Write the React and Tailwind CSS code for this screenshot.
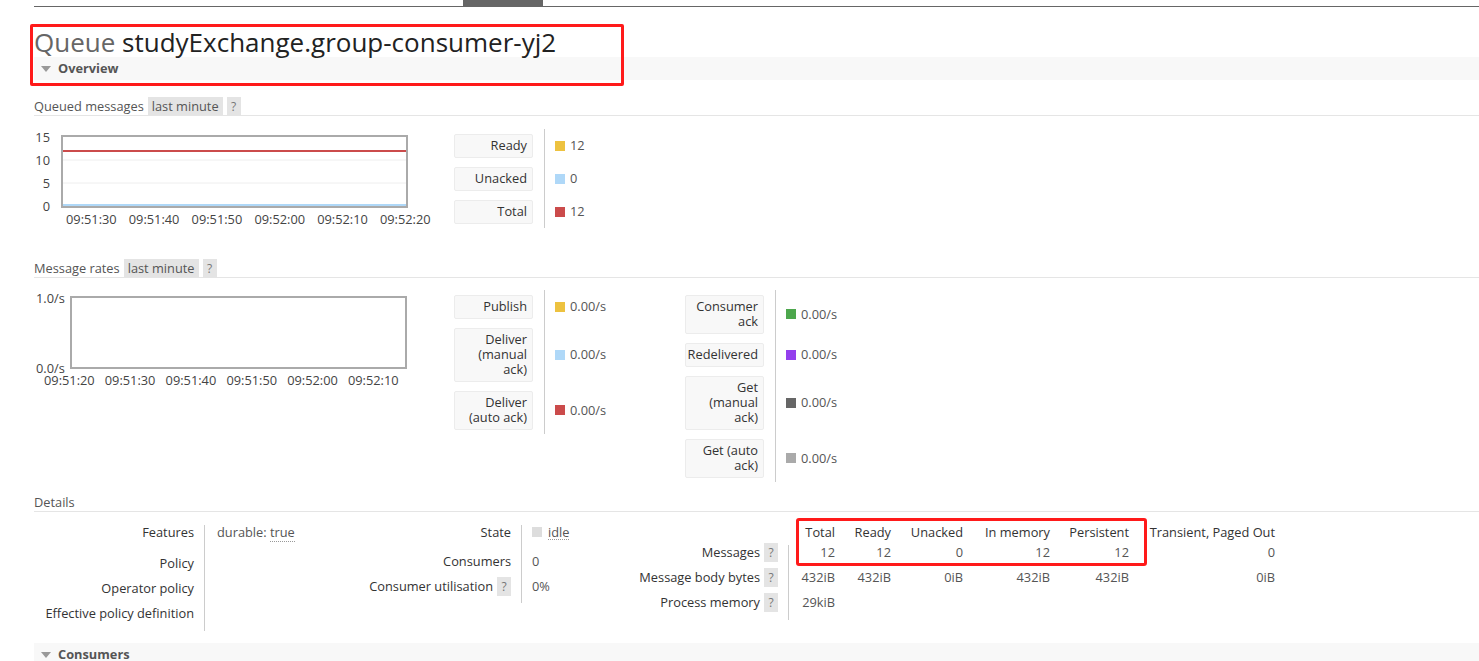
import React from 'react';

const font = { fontFamily: '"Open Sans", "Noto Sans", sans-serif' };

const Badge = ({ children }) => (
  <span className="inline-flex items-center h-[18px] px-[4px] bg-[#e4e4e4] text-[#555]">{children}</span>
);

const Help = () => (
  <span className="inline-flex items-center justify-center w-[14px] h-[19px] bg-[#e4e4e4] text-[#777] text-[12px]">?</span>
);

const SectionTitle = ({ label }) => (
  <div className="flex items-center gap-[4px] h-[19px] border-b border-[#e5e5e5] text-[#555]">
    <span>{label}</span>
    <Badge>last minute</Badge>
    <Help />
  </div>
);

const Bar = ({ label }) => (
  <div className="flex items-center h-[23px] bg-[#f8f8f8] pl-[6px] gap-[6px]">
    <svg width="12" height="8" viewBox="0 0 12 8"><path d="M1 1h10L6 7z" fill="#999" /></svg>
    <span className="font-bold text-[#555]">{label}</span>
  </div>
);

const LegendCol = ({ rows }) => (
  <div className="flex flex-col w-[231px]">
    {rows.map((r) => (
      <div key={r.label} className="flex items-stretch">
        <div className="py-[4.5px] pr-[11px]">
          <div className="w-[79px] bg-[#f8f8f8] border border-[#ececec] rounded-[2px] text-right pr-[5px] py-[3.5px] leading-[15px] text-[#333]">
            {r.label.map((l, i) => (
              <div key={i} className="h-[15px]">{l}</div>
            ))}
          </div>
        </div>
        <div className="flex items-center gap-[5px] border-l border-[#ccc] pl-[10px] text-[#555]">
          <span className="w-[10px] h-[10px]" style={{ background: r.color }} />
          <span>{r.value}</span>
        </div>
      </div>
    ))}
  </div>
);

const QueuedChart = () => (
  <div className="w-[420px] pt-[13.5px]">
    <div className="flex items-start">
      <div className="flex flex-col justify-between w-[16px] h-[85px] text-right text-[#444] leading-[15px]">
        <span>15</span>
        <span>10</span>
        <span>5</span>
        <span>0</span>
      </div>
      <svg width="347" height="73" className="ml-[11px] mt-[5.5px]">
        <rect x="1" y="1" width="345" height="71" fill="#fff" stroke="#aaa" strokeWidth="2" />
        <line x1="2" x2="345" y1="25" y2="25" stroke="#eee" />
        <line x1="2" x2="345" y1="48" y2="48" stroke="#eee" />
        <line x1="2" x2="345" y1="16" y2="16" stroke="#cb4b4b" strokeWidth="2" />
        <line x1="2" x2="345" y1="70" y2="70" stroke="#afd8f8" strokeWidth="2" />
      </svg>
    </div>
    <div className="flex pl-[32px] -mt-[3px] text-[#444]">
      {['09:51:30', '09:51:40', '09:51:50', '09:52:00', '09:52:10', '09:52:20'].map((t) => (
        <span key={t} className="w-[62.8px] shrink-0">{t}</span>
      ))}
    </div>
  </div>
);

const RatesChart = () => (
  <div className="w-[420px] pt-[13px]">
    <div className="flex items-start">
      <div className="flex flex-col justify-between w-[36px] h-[85px] text-[#444] leading-[15px] pl-[2px]">
        <span>1.0/s</span>
        <span>0.0/s</span>
      </div>
      <svg width="337" height="73" className="mt-[5px]">
        <rect x="1" y="1" width="335" height="71" fill="#fff" stroke="#aaa" strokeWidth="2" />
      </svg>
    </div>
    <div className="flex pl-[10px] -mt-[3px] text-[#444]">
      {['09:51:20', '09:51:30', '09:51:40', '09:51:50', '09:52:00', '09:52:10'].map((t) => (
        <span key={t} className="w-[60.8px] shrink-0">{t}</span>
      ))}
    </div>
  </div>
);

export default function App() {
  const counts = [
    ['Total', '12', '432iB', '29kiB', 'w-[46px]'],
    ['Ready', '12', '432iB', '', 'w-[56px]'],
    ['Unacked', '0', '0iB', '', 'w-[72px]'],
    ['In memory', '12', '432iB', '', 'w-[87px]'],
    ['Persistent', '12', '432iB', '', 'w-[79px]'],
    ['Transient, Paged Out', '0', '0iB', '', 'w-[146px]'],
  ];

  return (
    <div className="relative min-h-[661px] bg-white text-[12.8px] leading-[15px] overflow-hidden" style={font}>
      <div className="ml-[34px] flex h-[7px] border-b border-[#666]">
        <div className="ml-[429px] w-[80px] bg-[#666]" />
      </div>

      <div className="pl-[34px]">
        <h1 className="pt-[20px] text-[26px] leading-[30px] text-[#666] font-normal">
          Queue <span className="text-[#222]">studyExchange.group-consumer-yj2</span>
        </h1>
        <Bar label="Overview" />

        <div className="mt-[17px]">
          <SectionTitle label="Queued messages" />
        </div>
        <div className="flex">
          <QueuedChart />
          <div className="pt-[13px]">
            <LegendCol
              rows={[
                { label: ['Ready'], color: '#edc240', value: '12' },
                { label: ['Unacked'], color: '#afd8f8', value: '0' },
                { label: ['Total'], color: '#cb4b4b', value: '12' },
              ]}
            />
          </div>
        </div>

        <div className="mt-[31px]">
          <SectionTitle label="Message rates" />
        </div>
        <div className="flex">
          <RatesChart />
          <div className="pt-[12px] flex">
            <LegendCol
              rows={[
                { label: ['Publish'], color: '#edc240', value: '0.00/s' },
                { label: ['Deliver', '(manual', 'ack)'], color: '#afd8f8', value: '0.00/s' },
                { label: ['Deliver', '(auto ack)'], color: '#cb4b4b', value: '0.00/s' },
              ]}
            />
            <LegendCol
              rows={[
                { label: ['Consumer', 'ack'], color: '#4da74d', value: '0.00/s' },
                { label: ['Redelivered'], color: '#9440ed', value: '0.00/s' },
                { label: ['Get', '(manual', 'ack)'], color: '#666666', value: '0.00/s' },
                { label: ['Get (auto', 'ack)'], color: '#aaaaaa', value: '0.00/s' },
              ]}
            />
          </div>
        </div>

        <div className="mt-[11px] h-[19px] flex items-center border-b border-[#e5e5e5] text-[#555]">Details</div>

        <div className="flex pt-[13px]">
          {/* features / policy */}
          <div className="flex">
            <div className="w-[170px] flex flex-col text-right text-[#333] pr-[10px]">
              <div className="h-[31px]">Features</div>
              <div className="h-[25px]">Policy</div>
              <div className="h-[25px]">Operator policy</div>
              <div className="h-[25px]">Effective policy definition</div>
            </div>
            <div className="w-[150px] border-l border-[#ccc] pl-[12px] pb-[5px] text-[#555]">
              durable: <span className="border-b border-dotted border-[#999]">true</span>
            </div>
          </div>

          {/* state / consumers */}
          <div className="flex h-[78px]">
            <div className="w-[167px] flex flex-col text-right text-[#333] pr-[10px]">
              <div className="h-[24px]">State</div>
              <div className="h-[25px] flex items-center justify-end">Consumers</div>
              <div className="h-[25px] flex items-center justify-end gap-[4px]">Consumer utilisation <Help /></div>
            </div>
            <div className="w-[100px] border-l border-[#ccc] pl-[10px] text-[#555] flex flex-col">
              <div className="h-[24px] flex items-start gap-[6px]">
                <span className="w-[10px] h-[10px] bg-[#ddd] mt-[2px]" />
                <span className="border-b border-dotted border-[#999] leading-[14px]">idle</span>
              </div>
              <div className="h-[25px] flex items-center">0</div>
              <div className="h-[25px] flex items-center">0%</div>
            </div>
          </div>

          {/* messages */}
          <div className="flex flex-col">
            <div className="flex h-[20px] text-[#333]">
              <div className="w-[168px]" />
              {counts.map((c) => (
                <div key={c[0]} className={`${c[4]} text-right whitespace-nowrap`}>{c[0]}</div>
              ))}
            </div>
            <div className="flex">
              <div className="w-[168px] flex flex-col text-[#333] pr-[11px]">
                {['Messages', 'Message body bytes', 'Process memory'].map((l) => (
                  <div key={l} className="h-[25px] flex items-start justify-end gap-[4px]">
                    <span>{l}</span>
                    <span className="-mt-[2px]"><Help /></span>
                  </div>
                ))}
              </div>
              <div className="flex border-l border-[#ccc] text-[#555] -ml-px">
                {counts.map((c) => (
                  <div key={c[0]} className={`${c[4]} flex flex-col text-right`}>
                    <div className="h-[25px]">{c[1]}</div>
                    <div className="h-[25px]">{c[2]}</div>
                    <div className="h-[25px]">{c[3]}</div>
                  </div>
                ))}
              </div>
            </div>
          </div>
        </div>

        <div className="mt-[12px]">
          <Bar label="Consumers" />
        </div>
      </div>

      {/* red annotation boxes */}
      <div className="absolute left-[30px] top-[24px] w-[594px] h-[62px] border-[3px] border-[#ff1a1a] rounded-[2px] pointer-events-none" />
      <div className="absolute left-[796px] top-[518px] w-[351px] h-[48px] border-[3px] border-[#ff1a1a] rounded-[3px] pointer-events-none" />
    </div>
  );
}
